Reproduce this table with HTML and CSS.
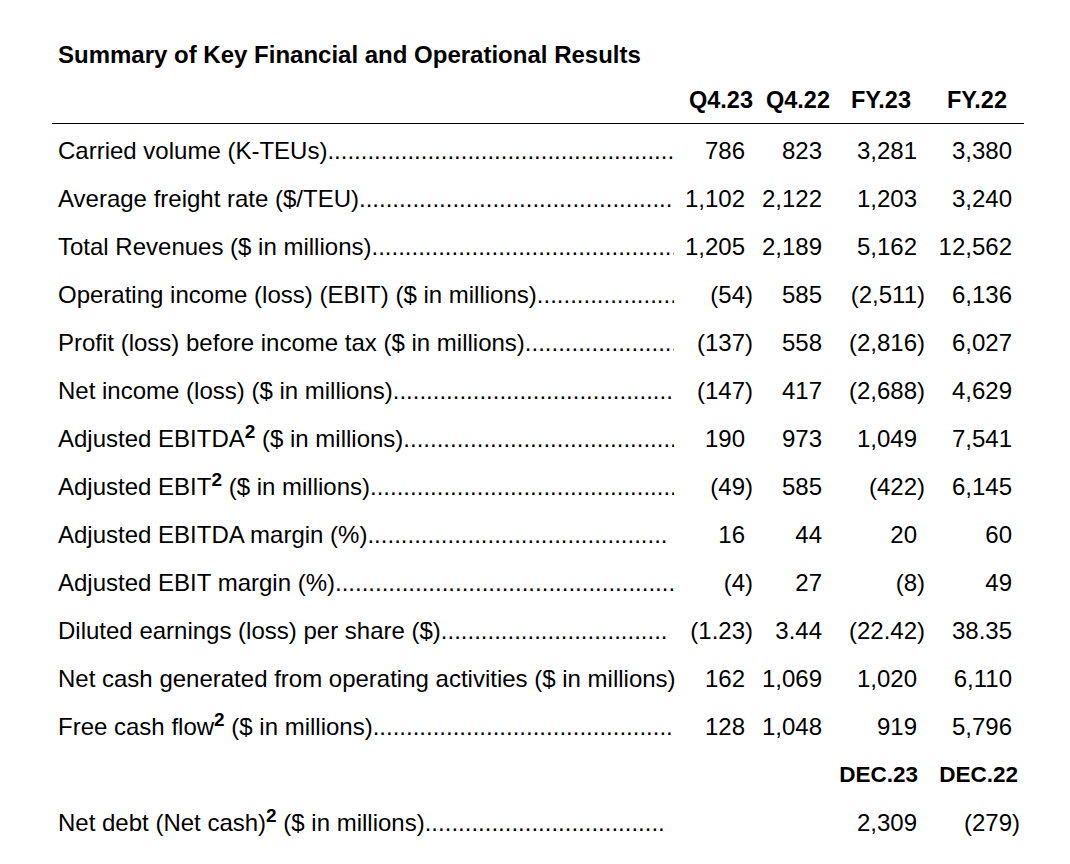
FILE: index.html
```html
<!DOCTYPE html>
<html lang="en">
<head>
<meta charset="utf-8">
<title>Summary of Key Financial and Operational Results</title>
<link rel="stylesheet" href="styles.css">
</head>
<body>
<div class="report">
  <h1 class="title">Summary of Key Financial and Operational Results</h1>
  <div class="row head">
    <div></div>
    <div class="h h1">Q4.23</div>
    <div class="h h2">Q4.22</div>
    <div class="h h3">FY.23</div>
    <div class="h h4">FY.22</div>
  </div>
  <div class="rows">
    <div class="row">
      <div class="label"><span class="txt">Carried volume (K-TEUs)</span><span class="lead"></span></div>
      <div class="num">786</div><div class="num">823</div><div class="num">3,281</div><div class="num">3,380</div>
    </div>
    <div class="row">
      <div class="label"><span class="txt">Average freight rate ($/TEU)</span><span class="lead"></span></div>
      <div class="num">1,102</div><div class="num">2,122</div><div class="num">1,203</div><div class="num">3,240</div>
    </div>
    <div class="row">
      <div class="label"><span class="txt">Total Revenues ($ in millions)</span><span class="lead"></span></div>
      <div class="num">1,205</div><div class="num">2,189</div><div class="num">5,162</div><div class="num">12,562</div>
    </div>
    <div class="row">
      <div class="label"><span class="txt">Operating income (loss) (EBIT) ($ in millions)</span><span class="lead"></span></div>
      <div class="num neg">(54)</div><div class="num">585</div><div class="num neg">(2,511)</div><div class="num">6,136</div>
    </div>
    <div class="row">
      <div class="label"><span class="txt">Profit (loss) before income tax ($ in millions)</span><span class="lead"></span></div>
      <div class="num neg">(137)</div><div class="num">558</div><div class="num neg">(2,816)</div><div class="num">6,027</div>
    </div>
    <div class="row">
      <div class="label"><span class="txt">Net income (loss) ($ in millions)</span><span class="lead"></span></div>
      <div class="num neg">(147)</div><div class="num">417</div><div class="num neg">(2,688)</div><div class="num">4,629</div>
    </div>
    <div class="row">
      <div class="label"><span class="txt">Adjusted EBITDA<sup class="fn">2</sup> ($ in millions)</span><span class="lead"></span></div>
      <div class="num">190</div><div class="num">973</div><div class="num">1,049</div><div class="num">7,541</div>
    </div>
    <div class="row">
      <div class="label"><span class="txt">Adjusted EBIT<sup class="fn">2</sup> ($ in millions)</span><span class="lead"></span></div>
      <div class="num neg">(49)</div><div class="num">585</div><div class="num neg">(422)</div><div class="num">6,145</div>
    </div>
    <div class="row">
      <div class="label short"><span class="txt">Adjusted EBITDA margin (%)</span><span class="lead"></span></div>
      <div class="num">16</div><div class="num">44</div><div class="num">20</div><div class="num">60</div>
    </div>
    <div class="row">
      <div class="label"><span class="txt">Adjusted EBIT margin (%)</span><span class="lead"></span></div>
      <div class="num neg">(4)</div><div class="num">27</div><div class="num neg">(8)</div><div class="num">49</div>
    </div>
    <div class="row">
      <div class="label short"><span class="txt">Diluted earnings (loss) per share ($)</span><span class="lead"></span></div>
      <div class="num neg">(1.23)</div><div class="num">3.44</div><div class="num neg">(22.42)</div><div class="num">38.35</div>
    </div>
    <div class="row">
      <div class="label"><span class="txt">Net cash generated from operating activities ($ in millions)</span></div>
      <div class="num">162</div><div class="num">1,069</div><div class="num">1,020</div><div class="num">6,110</div>
    </div>
    <div class="row">
      <div class="label"><span class="txt">Free cash flow<sup class="fn">2</sup> ($ in millions)</span><span class="lead"></span></div>
      <div class="num">128</div><div class="num">1,048</div><div class="num">919</div><div class="num">5,796</div>
    </div>
    <div class="row head2">
      <div></div><div></div><div></div>
      <div class="h d1">DEC.23</div>
      <div class="h d2">DEC.22</div>
    </div>
    <div class="row">
      <div class="label short"><span class="txt">Net debt (Net cash)<sup class="fn">2</sup> ($ in millions)</span><span class="lead"></span></div>
      <div></div><div></div>
      <div class="num">2,309</div><div class="num neg">(279)</div>
    </div>
  </div>
</div>
</body>
</html>
```
FILE: styles.css
```css
html, body {
  margin: 0;
  padding: 0;
  background: #ffffff;
}

body {
  color: #000000;
  font-family: "Liberation Sans", Arial, Helvetica, sans-serif;
}

.report {
  margin-left: 52px;
  width: 972px;
  padding-top: 40px;
}

.title {
  margin: 0 0 5px 6px;
  font-size: 24px;
  line-height: 30px;
  font-weight: bold;
}

.row {
  display: grid;
  grid-template-columns: 626px 75px 77px 95px 95px;
  padding-right: 4px;
  height: 48px;
  line-height: 48px;
  font-size: 24px;
  white-space: nowrap;
}

.head {
  border-bottom: 1px solid #000000;
}

.head .h {
  line-height: 50px;
}

.rows {
  padding-top: 3px;
}

.h {
  font-size: 23.5px;
  font-weight: bold;
  text-align: right;
}

.h1 { padding-right: 0; }
.h2 { padding-right: 0; }
.h3 { padding-right: 14px; }
.h4 { padding-right: 13px; }
.d1 { padding-right: 7px; }
.d2 { padding-right: 2px; }

.head2 .h {
  font-size: 22.5px;
}

.label {
  display: flex;
  min-width: 0;
  padding-left: 6px;
  padding-right: 4px;
}

.label.short {
  padding-right: 12px;
}

.txt {
  flex: none;
}

.lead {
  flex: 1 1 0;
  min-width: 0;
  overflow: hidden;
}

.lead::after {
  content: "........................................................................................................................................";
}

.fn {
  font-size: 19px;
  font-weight: bold;
  line-height: 0;
  vertical-align: 9px;
}

.num {
  text-align: right;
  padding-right: 0.333em;
}

.num.neg {
  padding-right: 0;
}
```
